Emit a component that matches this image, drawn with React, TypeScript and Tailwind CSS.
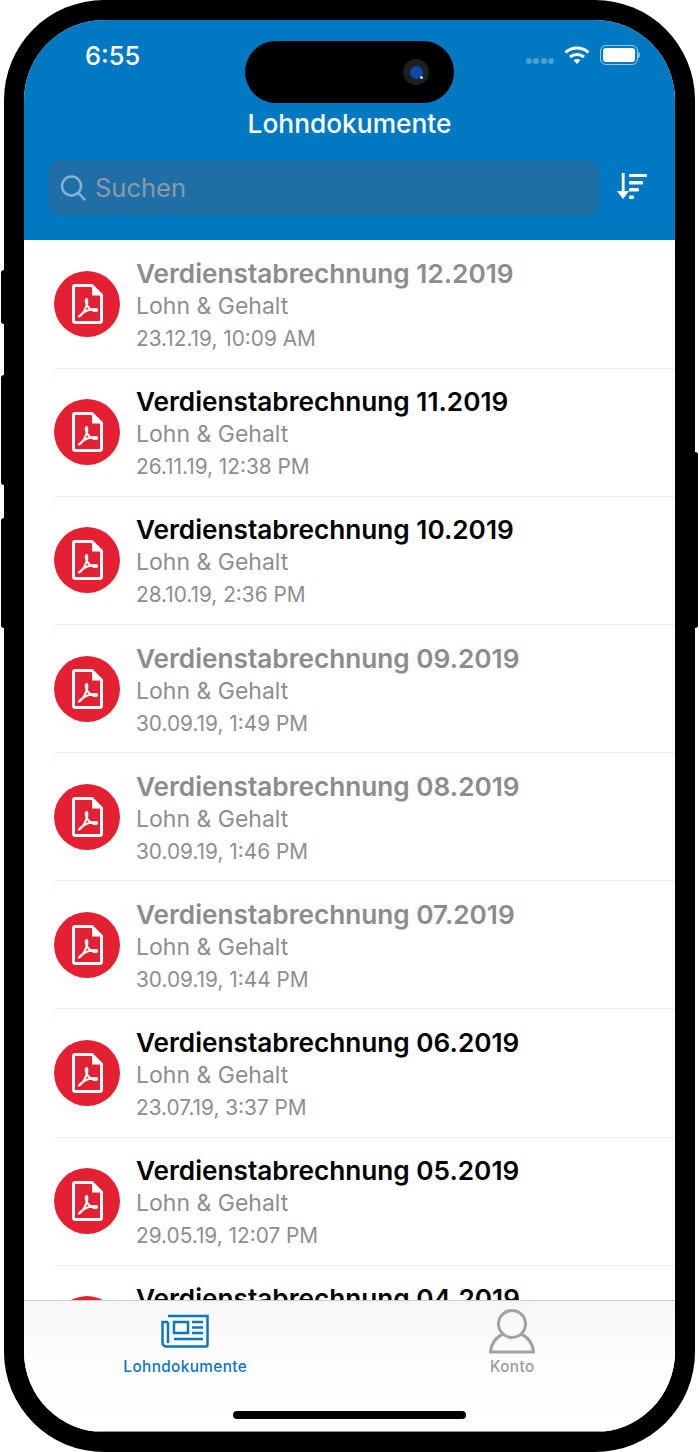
const docs = [
  { t: "Verdienstabrechnung 12.2019", d: "23.12.19, 10:09 AM", read: true },
  { t: "Verdienstabrechnung 11.2019", d: "26.11.19, 12:38 PM", read: false },
  { t: "Verdienstabrechnung 10.2019", d: "28.10.19, 2:36 PM", read: false },
  { t: "Verdienstabrechnung 09.2019", d: "30.09.19, 1:49 PM", read: true },
  { t: "Verdienstabrechnung 08.2019", d: "30.09.19, 1:46 PM", read: true },
  { t: "Verdienstabrechnung 07.2019", d: "30.09.19, 1:44 PM", read: true },
  { t: "Verdienstabrechnung 06.2019", d: "23.07.19, 3:37 PM", read: false },
  { t: "Verdienstabrechnung 05.2019", d: "29.05.19, 12:07 PM", read: false },
  { t: "Verdienstabrechnung 04.2019", d: "", read: false },
];

function PdfIcon() {
  return (
    <svg width="66" height="66" viewBox="0 0 66 66" className="shrink-0">
      <circle cx="33" cy="33" r="33" fill="#e32133" />
      <path d="M21 14.500h17L47.500 24v26a1.500 1.500 0 0 1-1.500 1.500H21a1.500 1.500 0 0 1-1.500-1.500V16a1.500 1.500 0 0 1 1.500-1.500Z" fill="none" stroke="#fff" strokeWidth="3" strokeLinejoin="round" />
      <path d="M38 15l9 9.500h-9Z" fill="#fff" />
      <path d="M25 45.500c3-1.500 6-6.500 7.500-11 1-3 1-6.500 0-6.500s-1 4 1 7c2 3 5 5 8.500 5 1.500 0 1.500-2 0-2-5 0-11 2-14.500 5-1.500 1.500-2.500 2.500-2.500 2.500Z" fill="none" stroke="#fff" strokeWidth="2.200" strokeLinejoin="round" />
    </svg>
  );
}

function Row({ t, d, read }: { t: string; d: string; read: boolean }) {
  return (
    <div className="h-[128.15px] shrink-0 pl-[30px] flex">
      <div className="flex-1 flex items-start gap-[17px] pt-[30.500px] border-b border-[#e4eff4]">
        <PdfIcon />
        <div className="-ml-[1px] -mt-[14px] flex flex-col">
          <div className={`text-[26.200px] leading-[34px] font-semibold whitespace-nowrap ${read ? "text-[#8c8c8c]" : "text-black"}`}>{t}</div>
          <div className="text-[23px] leading-[30px] text-[#8e8e8e]">Lohn &amp; Gehalt</div>
          <div className="text-[20.800px] leading-[30px] text-[#8e8e8e] mt-[3px]">{d}</div>
        </div>
      </div>
    </div>
  );
}

export default function App() {
  return (
    <div className="w-[699px] h-[1452px] bg-white overflow-hidden" style={{ fontFamily: "Inter, 'Liberation Sans', sans-serif" }}>
      <div className="relative ml-[4px] w-[691px] h-[1452px] bg-black rounded-[100px] pt-[20px] px-[20px]">
        {/* side buttons */}
        <div className="absolute -left-[3px] top-[270px] w-[6px] h-[54px] bg-black rounded-l-[3px]" />
        <div className="absolute -left-[3px] top-[375px] w-[6px] h-[110px] bg-black rounded-l-[3px]" />
        <div className="absolute -left-[3px] top-[518px] w-[6px] h-[110px] bg-black rounded-l-[3px]" />
        <div className="absolute -right-[3px] top-[452px] w-[6px] h-[176px] bg-black rounded-r-[3px]" />

        <div className="relative w-[651px] h-[1412px] rounded-[80px] overflow-hidden bg-white flex flex-col">
          {/* header */}
          <div className="h-[220px] shrink-0 bg-[#0079c2] flex flex-col">
            <div className="h-[66px] flex justify-between pl-[61px] pr-[35px] pt-[21px]">
              <span className="text-[25.500px] leading-[30px] font-medium text-white">6:55</span>
              <div className="flex items-start gap-[10px] pt-[4px]">
                <div className="flex gap-[1.500px] mt-[13px]">
                  <span className="w-[6px] h-[6px] rounded-full bg-white/30" />
                  <span className="w-[6px] h-[6px] rounded-full bg-white/30" />
                  <span className="w-[6px] h-[6px] rounded-full bg-white/30" />
                  <span className="w-[6px] h-[6px] rounded-full bg-white/30" />
                </div>
                <svg width="26" height="20" viewBox="0 0 26 20">
                  <path d="M1.500 7.500C8 1.500 18 1.500 24.500 7.500" fill="none" stroke="#fff" strokeWidth="3" />
                  <path d="M6 12c4-3.500 10-3.500 14 0" fill="none" stroke="#fff" strokeWidth="3" />
                  <path d="M9.500 15c2-1.500 5-1.500 7 0L13 19Z" fill="#fff" />
                </svg>
                <div className="flex items-center">
                  <div className="w-[38px] h-[20px] rounded-[6px] border border-white/60 p-[2px]">
                    <div className="w-full h-full bg-white rounded-[3px]" />
                  </div>
                  <div className="w-[2px] h-[6px] bg-white/50 rounded-r-full" />
                </div>
              </div>
            </div>
            <div className="text-[26.300px] leading-[32px] font-medium text-white text-center mt-[22px]">Lohndokumente</div>
            <div className="flex items-center pl-[24px] pr-[28px] mt-[20px]">
              <div className="w-[552px] h-[56px] rounded-[14px] bg-[#1f6fa6] flex items-center pl-[12px] gap-[9px]">
                <svg width="26" height="28" viewBox="0 0 26 28" fill="none" stroke="#83b3d4" strokeWidth="2.500" strokeLinecap="round">
                  <circle cx="11.500" cy="12" r="9.500" />
                  <path d="M18.500 19l6 6.500" />
                </svg>
                <span className="text-[25.500px] text-[#8c9aa6]">Suchen</span>
              </div>
              <svg width="32" height="28" viewBox="0 0 32 28" className="ml-[16px] -mt-[3px]" fill="#fff">
                <path d="M6.800 0h2.800v19h-2.800Z" />
                <path d="M2 18h12l-6 8Z" />
                <rect x="14" y="1" width="18" height="3" rx="1" />
                <rect x="14" y="8" width="14" height="3.500" rx="1" />
                <rect x="14" y="15" width="10" height="3.500" rx="1" />
                <rect x="14" y="22.500" width="5" height="3.500" rx="1" />
              </svg>
            </div>
          </div>

          {/* list */}
          <div className="flex-1 min-h-0 overflow-hidden flex flex-col pt-[0.600px]">
            {docs.map((x) => (
              <Row key={x.t} {...x} />
            ))}
          </div>

          {/* tab bar */}
          <div className="relative h-[132px] shrink-0 border-t border-b border-t-[#cdd0d2] border-b-[#8f8f8f] bg-gradient-to-b from-[#f7f7f7] via-[#fdfdfd] to-[#ffffff] grid grid-cols-2">
            <div className="flex flex-col items-center pt-[13px] pr-[3px]">
              <svg width="48" height="34" viewBox="0 0 48 34" fill="none" stroke="#0a77bd" strokeWidth="2.500">
                <path d="M7 2h39.500v29a1.500 1.500 0 0 1-1.500 1.500H5a3.500 3.500 0 0 1-3.500-3.500V8H7" />
                <path d="M7 8v21" />
                <rect x="13" y="8" width="14" height="11" />
                <path d="M31 8h11M31 13.500h11M31 19h11M13 25h29" />
              </svg>
              <span className="text-[15.300px] leading-[20px] font-medium tracking-[0.400px] text-[#0a77bd] mt-[9px]">Lohndokumente</span>
            </div>
            <div className="flex flex-col items-center pt-[8px]">
              <svg width="46" height="46" viewBox="0 0 46 46" fill="none" stroke="#a2a2a2" strokeWidth="3">
                <circle cx="23" cy="15" r="13.500" />
                <path d="M14 25C7 28 2 35 1.500 43h43C44 35 39 28 32 25" />
              </svg>
              <span className="text-[15.300px] leading-[20px] font-medium tracking-[0.400px] text-[#9c9c9c] mt-[2px]">Konto</span>
            </div>
            <div className="absolute left-[209px] top-[110px] w-[233px] h-[8px] rounded-full bg-black" />
          </div>

          {/* dynamic island */}
          <div className="absolute left-[221px] top-[21px] w-[209px] h-[62px] rounded-full bg-black flex items-center justify-end pr-[25px]">
            <div className="relative w-[26px] h-[26px] rounded-full bg-[#1c1f24] flex items-center justify-center">
              <div className="w-[13px] h-[13px] rounded-full bg-[#0b4aa8]" />
              <div className="absolute right-[6px] bottom-[6px] w-[3px] h-[3px] rounded-full bg-[#c8d0d8]" />
            </div>
          </div>
        </div>
      </div>
    </div>
  );
}
